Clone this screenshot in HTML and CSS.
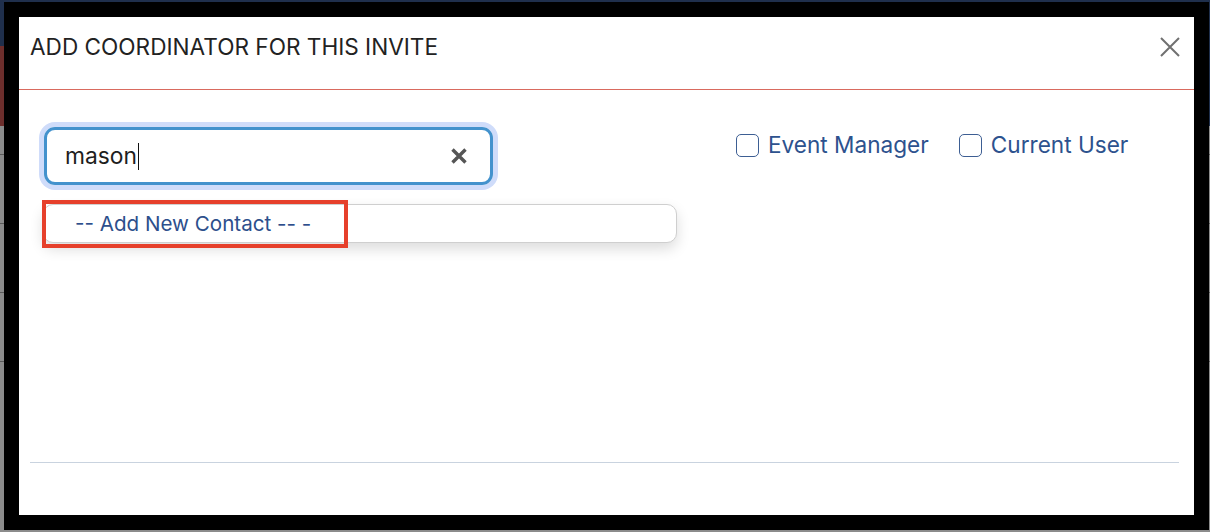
FILE: index.html
```html
<!DOCTYPE html>
<html lang="en">
<head>
<meta charset="utf-8">
<title>Add Coordinator</title>
<link rel="stylesheet" href="styles.css">
</head>
<body>
<div class="page">
  <div class="page-header"></div>
  <div class="page-band"><div class="band-red"></div></div>
  <div class="page-rest">
    <div class="rule"></div>
    <div class="rule"></div>
    <div class="rule"></div>
    <div class="rule"></div>
  </div>
</div>

<div class="modal">
  <div class="modal-header">
    <h1 class="modal-title">ADD COORDINATOR FOR THIS INVITE</h1>
    <button class="close-btn" aria-label="Close">
      <svg width="20" height="20" viewBox="0 0 20 20"><path d="M1 1 L19 19 M19 1 L1 19" stroke="#707070" stroke-width="2" fill="none"/></svg>
    </button>
  </div>
  <div class="modal-body">
    <div class="search-col">
      <div class="search-box">
        <span class="search-text">mason</span><span class="caret"></span>
        <span class="clear-btn">
          <svg width="18" height="18" viewBox="0 0 18 18"><path d="M2.5 2.5 L15.5 15.5 M15.5 2.5 L2.5 15.5" stroke="#555" stroke-width="3.4" fill="none"/></svg>
        </span>
      </div>
      <div class="dropdown">
        <div class="dropdown-item">-- Add New Contact -- -</div>
        <div class="highlight"></div>
      </div>
    </div>
    <div class="check-row">
      <label class="check"><span class="box"></span>Event Manager</label>
      <label class="check"><span class="box"></span>Current User</label>
    </div>
  </div>
  <div class="modal-footer"></div>
</div>
</body>
</html>
```

FILE: styles.css
```css
* { box-sizing: border-box; }
html, body { margin: 0; padding: 0; }
body {
  width: 1210px;
  height: 532px;
  overflow: hidden;
  position: relative;
  font-family: Inter, "Noto Sans", sans-serif;
  background: #8c8c8c;
}
.page { display: flex; flex-direction: column; height: 532px; }
.page-header { height: 46px; background: #1f2f4c; }
.page-band { height: 80px; background: #1f2f4c; }
.band-red { width: 300px; height: 80px; background: #6d2e2c; }
.page-rest { flex: 1; display: flex; flex-direction: column; gap: 68px; padding-top: 28px; }
.rule { height: 1px; background: #5a5a5a; }

.modal {
  position: absolute;
  left: 4px;
  top: 2px;
  width: 1205px;
  height: 528px;
  border: 15px solid #000;
  background: #fff;
  display: flex;
  flex-direction: column;
}
.modal-header {
  height: 73px;
  border-bottom: 1px solid #d96a5e;
  display: flex;
  align-items: flex-start;
  justify-content: space-between;
  padding: 16px 14px 0 11px;
}
.modal-title {
  margin: 0;
  font-size: 22.6px;
  font-weight: 400;
  line-height: 28px;
  color: #222;
  letter-spacing: 0;
}
.close-btn {
  border: 0;
  background: none;
  padding: 0;
  margin-top: 4px;
  width: 20px;
  height: 20px;
  display: flex;
}
.modal-body {
  height: 372px;
  display: flex;
  align-items: flex-start;
  padding: 37px 0 0 24px;
}
.search-col { width: 636px; display: flex; flex-direction: column; }
.search-box {
  width: 449px;
  height: 58px;
  margin-left: 1px;
  border: 3px solid #4392cd;
  border-radius: 11px;
  box-shadow: 0 0 0 5px #cfdcfa;
  display: flex;
  align-items: center;
  padding: 0 22px 0 18px;
}
.search-text { font-size: 22.8px; color: #1e1e1e; line-height: 30px; }
.caret { width: 1.5px; height: 27px; background: #111; margin-left: 1px; }
.clear-btn { margin-left: auto; display: flex; }
.dropdown {
  position: relative;
  margin-top: 19px;
  width: 634px;
  height: 39px;
  border: 1px solid #cfcfcf;
  border-radius: 10px;
  background: #fff;
  box-shadow: 0 6px 14px rgba(0,0,0,0.14);
  display: flex;
  align-items: center;
}
.dropdown-item {
  padding-left: 31px;
  font-size: 20.6px;
  color: #2d4f8c;
  line-height: 26px;
}
.highlight {
  position: absolute;
  left: -2px;
  top: -5px;
  width: 306px;
  height: 48px;
  border: 4px solid #e6402b;
}
.check-row {
  display: flex;
  gap: 30px;
  margin-left: 57px;
  padding-top: 5px;
}
.check {
  display: flex;
  align-items: center;
  gap: 9px;
  font-size: 22.6px;
  color: #2d528e;
  line-height: 26px;
}
.box {
  width: 23px;
  height: 23px;
  border: 1.5px solid #3d5e93;
  border-radius: 5px;
  background: #fff;
}
.modal-footer {
  margin: 0 15px 0 11px;
  border-top: 1.5px solid #c9d3df;
}
```
